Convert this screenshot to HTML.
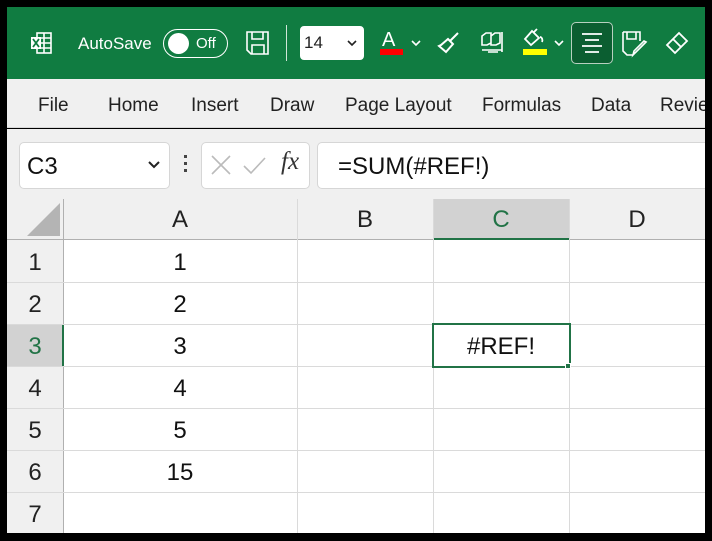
<!DOCTYPE html><html><head><style>
*{margin:0;padding:0;box-sizing:border-box}
body{width:712px;height:541px;background:#000;position:relative;overflow:hidden;font-family:"Liberation Sans",sans-serif}
.a{position:absolute}
.top{left:7px;top:7px;width:698px;height:72px;background:#107c41}
.menu{left:7px;top:79px;width:698px;height:49px;background:#f0f0f0;border-bottom:1px solid #d8d8d8}
.menu span{position:absolute;top:16px;font-size:19px;color:#222}
.fb{left:7px;top:129px;width:698px;height:70px;background:#f0f0f0}
.box{background:#fff;border:1px solid #d6d6d6;border-radius:5px}
.grid{left:7px;top:199px;width:698px;height:334px;background:#fff}
.hdr{background:#f0f0f0;color:#222;font-size:24px;text-align:center}
.hl{background:#c0c0c0}
.vl{width:1px;background:#dadada}
.hline{height:1px;background:#dadada}
.cell{font-size:24px;text-align:center;color:#111}
</style></head><body>
<div class="a top"></div>
<svg class="a" style="left:28px;top:30px" width="26" height="26" viewBox="0 0 26 26" fill="none" stroke="#fff" stroke-width="1.6"><rect x="9" y="3" width="14" height="20"/><path d="M9 8h14M9 13h14M9 18h14M16 3v20"/><rect x="3" y="7" width="10" height="12" fill="#fff" stroke="none"/><path d="M5 9l6 8M11 9l-6 8" stroke="#107c41" stroke-width="1.8"/></svg>
<div class="a" style="left:78px;top:34px;color:#fff;font-size:17px">AutoSave</div>
<div class="a" style="left:163px;top:29px;width:65px;height:29px;border:1.5px solid #fff;border-radius:15px"></div>
<div class="a" style="left:168px;top:33px;width:21px;height:21px;border-radius:50%;background:#fff"></div>
<div class="a" style="left:196px;top:35px;color:#fff;font-size:15px">Off</div>
<svg class="a" style="left:245px;top:30px" width="26" height="26" viewBox="0 0 26 26" fill="none" stroke="#fff" stroke-width="1.6"><path d="M2 2h21v22H6l-4-4z"/><path d="M7 2v7h11V2M7 24v-9h12v9"/></svg>
<div class="a" style="left:286px;top:25px;width:1px;height:36px;background:#d0e6d8"></div>
<div class="a box" style="left:300px;top:26px;width:64px;height:34px;border-radius:4px;border-color:#fff"></div>
<div class="a" style="left:304px;top:33px;font-size:17px;color:#222">14</div>
<svg class="a" style="left:347px;top:39px" width="10" height="8"><path d="M1 2l4 4 4-4" stroke="#222" stroke-width="1.6" fill="none"/></svg>
<div class="a" style="left:382px;top:29px;color:#fff;font-size:20px">A</div>
<div class="a" style="left:380px;top:49px;width:23px;height:6px;background:#f00"></div>
<svg class="a" style="left:411px;top:39px" width="10" height="8"><path d="M1 2l4 4 4-4" stroke="#fff" stroke-width="1.6" fill="none"/></svg>
<svg class="a" style="left:436px;top:30px" width="26" height="26" viewBox="0 0 26 26" fill="none" stroke="#fff" stroke-width="2"><path d="M22 3l-8 8M12 9l5 5-7 8-7-6 2-1z"/></svg>
<svg class="a" style="left:479px;top:30px" width="26" height="26" viewBox="0 0 26 26" fill="none" stroke="#fff" stroke-width="1.6"><path d="M3 6l4-3h5v10l-4 2H3zM12 6l4-3h5v10l-4 2h-5z M3 20h20M23 2v20M9 22h10"/></svg>
<svg class="a" style="left:522px;top:28px" width="26" height="22" viewBox="0 0 26 22" fill="none" stroke="#fff" stroke-width="1.8"><path d="M10 3l-7 8 6 6 8-7zM12 4l3-3M18 9c2 0 3 3 2 5"/></svg>
<div class="a" style="left:523px;top:49px;width:24px;height:6px;background:#ff0"></div>
<svg class="a" style="left:554px;top:39px" width="10" height="8"><path d="M1 2l4 4 4-4" stroke="#fff" stroke-width="1.6" fill="none"/></svg>
<div class="a" style="left:571px;top:22px;width:42px;height:42px;background:#0b5e31;border:1px solid #b8d0c0;border-radius:5px"></div>
<svg class="a" style="left:580px;top:31px" width="24" height="24"><path d="M2 3h20M5 9h14M2 15h20M5 21h14" stroke="#fff" stroke-width="1.8"/></svg>
<svg class="a" style="left:621px;top:30px" width="28" height="28" viewBox="0 0 28 28" fill="none" stroke="#fff" stroke-width="1.6"><path d="M2 2h17v9M2 2v19l4 4h6M6 2v7h9V2M25 12l-10 10-3 3 1-4 10-10z"/></svg>
<svg class="a" style="left:664px;top:30px" width="26" height="26" viewBox="0 0 26 26" fill="none" stroke="#fff" stroke-width="1.8"><path d="M15 3l8 8-12 12-8-8zM9 9l8 8"/></svg>
<div class="a menu"><span style="left:31px">File</span><span style="left:101px">Home</span><span style="left:184px">Insert</span><span style="left:263px">Draw</span><span style="left:338px">Page Layout</span><span style="left:475px">Formulas</span><span style="left:584px">Data</span><span style="left:653px">Revie</span></div>
<div class="a fb"></div>
<div class="a box" style="left:19px;top:142px;width:151px;height:47px"></div>
<div class="a" style="left:27px;top:153px;font-size:24px;color:#111">C3</div>
<svg class="a" style="left:148px;top:160px" width="12" height="9"><path d="M1 2l5 5 5-5" stroke="#222" stroke-width="2" fill="none"/></svg>
<div class="a" style="left:184px;top:155px;width:3px;height:3px;background:#444"></div>
<div class="a" style="left:184px;top:162px;width:3px;height:3px;background:#444"></div>
<div class="a" style="left:184px;top:169px;width:3px;height:3px;background:#444"></div>
<div class="a box" style="left:201px;top:142px;width:109px;height:47px"></div>
<svg class="a" style="left:210px;top:154px" width="62" height="22"><path d="M2 2l18 18M20 2L2 20M34 12l7 7 14-15" stroke="#bbb" stroke-width="1.6" fill="none"/></svg>
<div class="a" style="left:281px;top:148px;font-family:'Liberation Serif',serif;font-style:italic;font-size:25px;color:#333">fx</div>
<div class="a box" style="left:317px;top:142px;width:400px;height:47px"></div>
<div class="a" style="left:338px;top:153px;font-size:24px;color:#111">=SUM(#REF!)</div>
<div class="a grid"></div>
<div class="a hdr" style="left:7px;top:199px;width:698px;height:41px"></div>
<div class="a hdr" style="left:7px;top:240px;width:56px;height:293px"></div>
<div class="a hl" style="left:433px;top:199px;width:136px;height:41px;background:#d2d2d2"></div>
<div class="a hl" style="left:7px;top:324px;width:56px;height:42px;background:#d2d2d2"></div>
<svg class="a" style="left:27px;top:203px" width="34" height="34"><path d="M33 0V33H0z" fill="#b4b4b4"/></svg>
<div class="a" style="left:7px;top:239px;width:698px;height:1px;background:#b0b0b0"></div>
<div class="a" style="left:63px;top:199px;width:1px;height:334px;background:#b0b0b0"></div>
<div class="a" style="left:433px;top:238px;width:136px;height:2px;background:#217346"></div>
<div class="a" style="left:62px;top:324px;width:2px;height:42px;background:#217346"></div>
<div class="a vl" style="left:297px;top:199px;height:334px"></div>
<div class="a vl" style="left:433px;top:199px;height:334px"></div>
<div class="a vl" style="left:569px;top:199px;height:334px"></div>
<div class="a hline" style="left:7px;top:282px;width:698px"></div>
<div class="a hline" style="left:7px;top:324px;width:698px"></div>
<div class="a hline" style="left:7px;top:366px;width:698px"></div>
<div class="a hline" style="left:7px;top:408px;width:698px"></div>
<div class="a hline" style="left:7px;top:450px;width:698px"></div>
<div class="a hline" style="left:7px;top:492px;width:698px"></div>
<div class="a hdr" style="left:63px;top:206px;width:234px;background:none">A</div>
<div class="a hdr" style="left:297px;top:206px;width:136px;background:none">B</div>
<div class="a hdr" style="left:433px;top:206px;width:136px;background:none;color:#217346">C</div>
<div class="a hdr" style="left:569px;top:206px;width:136px;background:none">D</div>
<div class="a hdr" style="left:7px;top:249px;width:56px;background:none">1</div>
<div class="a hdr" style="left:7px;top:291px;width:56px;background:none">2</div>
<div class="a hdr" style="left:7px;top:333px;width:56px;background:none;color:#217346">3</div>
<div class="a hdr" style="left:7px;top:375px;width:56px;background:none">4</div>
<div class="a hdr" style="left:7px;top:417px;width:56px;background:none">5</div>
<div class="a hdr" style="left:7px;top:459px;width:56px;background:none">6</div>
<div class="a hdr" style="left:7px;top:501px;width:56px;background:none">7</div>
<div class="a cell" style="left:63px;top:249px;width:234px">1</div>
<div class="a cell" style="left:63px;top:291px;width:234px">2</div>
<div class="a cell" style="left:63px;top:333px;width:234px">3</div>
<div class="a cell" style="left:63px;top:375px;width:234px">4</div>
<div class="a cell" style="left:63px;top:417px;width:234px">5</div>
<div class="a cell" style="left:63px;top:459px;width:234px">15</div>
<div class="a" style="left:432px;top:323px;width:139px;height:45px;border:2px solid #217346"></div>
<div class="a cell" style="left:433px;top:333px;width:136px">#REF!</div>
<div class="a" style="left:565px;top:363px;width:6px;height:6px;background:#217346;border:1px solid #fff"></div>
<div class="a" style="left:705px;top:0;width:7px;height:541px;background:#000"></div>
</body></html>
